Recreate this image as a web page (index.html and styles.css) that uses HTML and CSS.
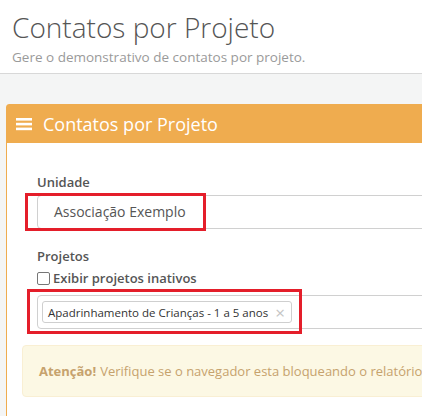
FILE: index.html
```html
<!DOCTYPE html>
<html lang="pt-BR">

<head>
  <meta charset="UTF-8">
  <meta name="viewport" content="width=device-width, initial-scale=1.0">
  <title>Contatos por Projeto</title>
  <link rel="stylesheet" href="styles.css">
</head>

<body>
  <div class="page-header">
    <h1>Contatos por Projeto</h1>
    <p class="subtitle">Gere o demonstrativo de contatos por projeto.</p>
  </div>

  <div class="content">
    <div class="panel">
      <div class="panel-heading">
        <svg class="menu-icon" width="16" height="14" viewBox="0 0 16 14">
          <rect x="0" y="1" width="16" height="2.6" fill="#fff" />
          <rect x="0" y="5.8" width="16" height="2.6" fill="#fff" />
          <rect x="0" y="10.6" width="16" height="2.6" fill="#fff" />
        </svg>
        <span>Contatos por Projeto</span>
      </div>
      <div class="panel-body">
        <div class="form-area">
          <div class="form-group">
            <label class="control-label">Unidade</label>
            <div class="select-box">Associação Exemplo</div>
          </div>
          <div class="form-group">
            <label class="control-label">Projetos</label>
            <label class="check-label"><span class="checkbox"></span>Exibir projetos inativos</label>
            <div class="multi-box">
              <span class="tag">Apadrinhamento de Crianças - 1 a 5 anos <span class="tag-close">&times;</span></span>
            </div>
          </div>
        </div>
        <div class="alert">
          <strong>Atenção!</strong> Verifique se o navegador esta bloqueando o relatório.
        </div>
      </div>
    </div>
  </div>

  <!-- highlight boxes from the screenshot -->
  <div class="highlight highlight-unit"></div>
  <div class="highlight highlight-projects"></div>
</body>

</html>
```

FILE: styles.css
```css
html,
body {
  margin: 0;
  padding: 0;
  overflow: hidden;
}

body {
  font-family: "Open Sans", Arial, sans-serif;
  background-color: #f4f5f5;
  color: #555;
  width: 422px;
  height: 416px;
  position: relative;
}

.page-header {
  background-color: #fff;
  border-bottom: 1px solid #d8d8d8;
  height: 73px;
  padding: 0 12px;
  box-sizing: content-box;
}

.page-header h1 {
  margin: 0;
  padding-top: 8px;
  font-size: 28px;
  font-weight: 300;
  line-height: 38px;
  color: #555;
}

.subtitle {
  margin: 0;
  padding-top: 3px;
  font-size: 13.5px;
  line-height: 16px;
  color: #9a9a9a;
}

.content {
  padding: 30px 0 0 6px;
}

.panel {
  width: 460px;
  border: 1px solid #efac4f;
  background-color: #fff;
  border-radius: 3px 0 0 0;
  height: 320px;
}

.panel-heading {
  background-color: #efac4f;
  height: 38px;
  display: flex;
  align-items: center;
  padding-left: 9px;
  color: #fff;
  font-size: 18px;
}

.menu-icon {
  margin-right: 11px;
}

.panel-body {
  padding: 30px 15px 0 15px;
}

.form-area {
  padding: 0 15px;
}

.form-group {
  margin-bottom: 18px;
}

.form-group:last-child {
  margin-bottom: 16px;
}

.control-label {
  display: block;
  font-size: 13px;
  font-weight: 600;
  line-height: 18px;
  margin-bottom: 4px;
  color: #555;
}

.select-box {
  height: 32px;
  border: 1px solid #d0d0d0;
  border-radius: 4px 0 0 4px;
  padding-left: 16px;
  font-size: 14px;
  line-height: 32px;
  color: #555;
}

.check-label {
  display: flex;
  align-items: center;
  font-size: 13px;
  font-weight: 600;
  line-height: 18px;
  margin-top: 4px;
  margin-bottom: 8px;
}

.checkbox {
  display: inline-block;
  width: 11px;
  height: 11px;
  border: 1px solid #767676;
  border-radius: 2px;
  margin-right: 3px;
  background-color: #fff;
}

.multi-box {
  height: 32px;
  border: 1px solid #d0d0d0;
  border-radius: 4px 0 0 4px;
  padding: 0 4px;
  display: flex;
  align-items: center;
}

.tag {
  display: inline-flex;
  align-items: center;
  height: 20px;
  border: 1px solid #cfcfcf;
  border-radius: 3px;
  padding: 0 6px 0 5px;
  font-size: 11.5px;
  color: #333;
  background-color: #fff;
}

.tag-close {
  color: #c4c4c4;
  font-size: 17px;
  margin-left: 7px;
}

.alert {
  background-color: #fcf8e4;
  border: 1px solid #f9efd3;
  border-radius: 4px;
  height: 50px;
  padding-left: 16px;
  display: flex;
  align-items: center;
  font-size: 13px;
  color: #c6a26d;
  white-space: nowrap;
  margin-top: 18px;
}

.form-area + .alert {
  margin-top: 0;
}

.alert strong {
  margin-right: 4px;
  font-weight: 700;
}

.highlight {
  position: absolute;
  border: 3px solid #e41e2a;
  box-sizing: border-box;
}

.highlight-unit {
  left: 25px;
  top: 193px;
  width: 181px;
  height: 38px;
}

.highlight-projects {
  left: 27px;
  top: 289px;
  width: 275px;
  height: 45px;
}
```
